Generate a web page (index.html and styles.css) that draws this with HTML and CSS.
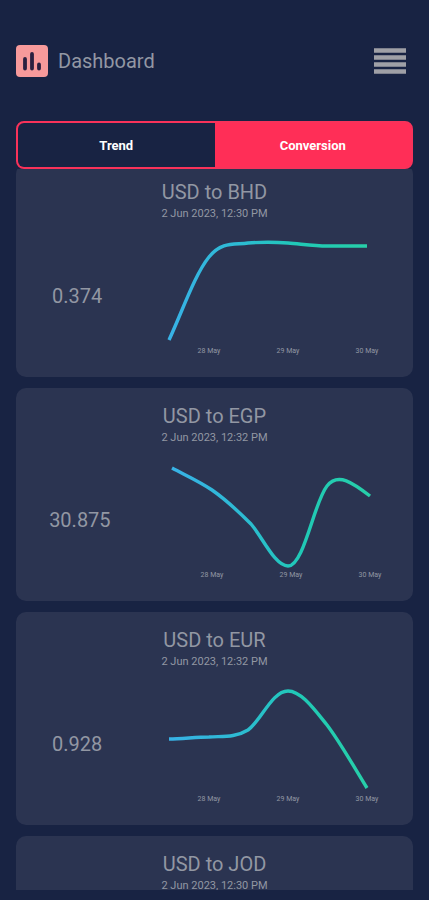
FILE: index.html
```html
<!DOCTYPE html>
<html lang="en">
<head>
<meta charset="utf-8">
<meta name="viewport" content="width=device-width, initial-scale=1">
<title>Dashboard</title>
<link rel="stylesheet" href="styles.css">
</head>
<body>
<header class="topbar">
  <svg class="logo" viewBox="0 0 32 32" aria-hidden="true">
    <rect width="32" height="32" rx="4" fill="#f79a9b"/>
    <path d="M9 14V23.5M16 9V23.5M23 19.5V23.5" stroke="#2a2040" stroke-width="3.8" stroke-linecap="round" fill="none"/>
  </svg>
  <h1 class="heading">Dashboard</h1>
  <button class="menu" type="button" aria-label="Menu">
    <svg class="menu-icon" viewBox="0 0 32 26" aria-hidden="true">
      <path d="M0 2.5H32M0 9.5H32M0 16.5H32M0 23.5H32" stroke="#9fa0a6" stroke-width="4.4"/>
    </svg>
  </button>
</header>

<nav class="tabs">
  <button class="tab" type="button">Trend</button>
  <button class="tab tab-active" type="button">Conversion</button>
</nav>

<main class="list">
  <article class="card">
    <h2 class="pair">USD to BHD</h2>
    <p class="date">2 Jun 2023, 12:30 PM</p>
    <div class="row">
      <span class="rate">0.374</span>
      <svg class="chart" viewBox="0 0 203 136">
        <defs>
          <linearGradient id="line" gradientUnits="userSpaceOnUse" x1="-5" y1="0" x2="193" y2="0">
            <stop offset="0" stop-color="#38b2e6"/>
            <stop offset="0.35" stop-color="#2dbbd3"/>
            <stop offset="0.65" stop-color="#20c9b6"/>
            <stop offset="1" stop-color="#27cfa9"/>
          </linearGradient>
        </defs>
        <path class="line" d="M-5 112C8 84 21 46 35 29C48 13 61 17 74 15C87 14 101 14 114 15C127 16 140 18 153 18L193 18"/>
        <text class="tick" x="35" y="125">28 May</text>
        <text class="tick" x="114" y="125">29 May</text>
        <text class="tick" x="193" y="125">30 May</text>
      </svg>
    </div>
  </article>

  <article class="card">
    <h2 class="pair">USD to EGP</h2>
    <p class="date">2 Jun 2023, 12:32 PM</p>
    <div class="row">
      <span class="rate">30.875</span>
      <svg class="chart" viewBox="0 0 203 136">
        <path class="line" d="M-5 16C8 23 22 29 35 38C48 47 61 59 74 72C86 86 98 114 111 114C127 114 137 50 150 34C161 20 176 31 193 44"/>
        <text class="tick" x="35" y="125">28 May</text>
        <text class="tick" x="114" y="125">29 May</text>
        <text class="tick" x="193" y="125">30 May</text>
      </svg>
    </div>
  </article>

  <article class="card">
    <h2 class="pair">USD to EUR</h2>
    <p class="date">2 Jun 2023, 12:32 PM</p>
    <div class="row">
      <span class="rate">0.928</span>
      <svg class="chart" viewBox="0 0 203 136">
        <path class="line" d="M-5 63C8 63 22 61 35 61C48 60 61 62 74 54C87 45 98 15 114 15C127 15 140 33 153 49C166 66 180 91 193 112"/>
        <text class="tick" x="35" y="125">28 May</text>
        <text class="tick" x="114" y="125">29 May</text>
        <text class="tick" x="193" y="125">30 May</text>
      </svg>
    </div>
  </article>

  <article class="card">
    <h2 class="pair">USD to JOD</h2>
    <p class="date">2 Jun 2023, 12:30 PM</p>
  </article>
</main>
</body>
</html>
```

FILE: styles.css
```css
* {
  box-sizing: border-box;
}

body {
  margin: 0;
  height: 100vh;
  padding: 0 16px 10px;
  display: flex;
  flex-direction: column;
  overflow: hidden;
  background: #182343;
  color: #9297a3;
  font-family: Roboto, "Liberation Sans", sans-serif;
}

.topbar {
  flex: none;
  display: flex;
  align-items: center;
  gap: 10px;
  padding: 45px 7px 44px 0;
}

.logo {
  width: 32px;
  height: 32px;
}

.heading,
.pair,
.date {
  margin: 0;
  font-weight: 400;
}

.heading,
.pair,
.rate {
  font-size: 20px;
  line-height: 24px;
}

.menu {
  display: flex;
  margin-left: auto;
  padding: 0;
  border: 0;
  background: none;
}

.menu-icon {
  width: 32px;
  height: 26px;
}

.tabs {
  flex: none;
  display: flex;
  height: 48px;
  border: 2px solid #f8325a;
  border-radius: 8px;
  background: #ff2e57;
}

.tab {
  flex: 1;
  padding: 2px 0 0;
  border: 0;
  border-radius: 6px 0 0 6px;
  background: #182343;
  color: #fff;
  font: 700 13px/16px Roboto, "Liberation Sans", sans-serif;
}

.tab-active {
  border-radius: 0 6px 6px 0;
  background: #ff2e57;
}

.list {
  flex: 1;
  min-height: 0;
  display: flex;
  flex-direction: column;
  gap: 11px;
  overflow: hidden;
}

.card {
  flex: none;
  padding: 16px 0 13px;
  border-radius: 10px;
  background: #2b3451;
  text-align: center;
}

/* The list rests slightly scrolled beneath the tabs. */
.card:first-child {
  margin-top: -5px;
}

.date {
  margin-top: 2px;
  font-size: 11px;
  line-height: 15px;
}

.row {
  display: flex;
  align-items: center;
  justify-content: space-around;
  margin-top: 7px;
}

.chart {
  width: 203px;
  height: 136px;
  overflow: visible;
}

.line {
  fill: none;
  stroke: url(#line);
  stroke-width: 3.4;
}

.tick {
  fill: #9297a3;
  font-size: 7px;
  text-anchor: middle;
}
```
